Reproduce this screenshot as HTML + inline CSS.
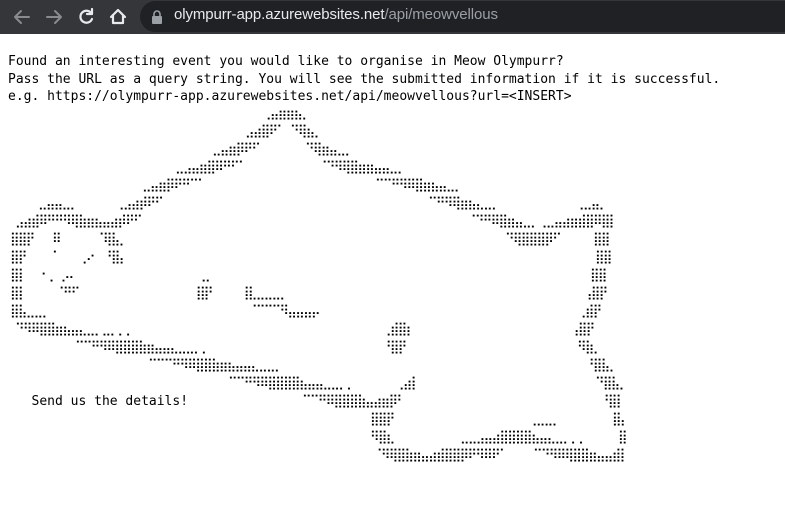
<!DOCTYPE html>
<html><head><meta charset="utf-8">
<style>
html,body{margin:0;padding:0;background:#fff;width:785px;height:506px;overflow:hidden}
.bar{position:absolute;left:0;top:0;width:785px;height:34px;background:#35363a}
.pill{position:absolute;left:140px;top:1px;width:660px;height:31px;border-radius:16px;background:#202124}
.url{position:absolute;left:174px;top:6px;font:15px "Liberation Sans","DejaVu Sans",sans-serif;color:#e8eaed;letter-spacing:-0.1px}
.url span{color:#9aa0a6}
pre{margin:0;font-family:"DejaVu Sans Mono","Liberation Mono",monospace;font-size:13px;color:#000;position:absolute;left:8px;white-space:pre}
#t{top:53px;line-height:17.5px}
#s{top:393px;left:31.5px;line-height:18px}
i{position:absolute;font-style:normal;white-space:pre;font-family:"DejaVu Sans Mono",monospace;font-size:13px;line-height:18px;letter-spacing:-1.65px;color:#000}
</style></head><body>
<div class="bar">
<svg width="140" height="34" style="position:absolute;left:0;top:0">
<g fill="none" stroke="#8a8b8e" stroke-width="2" stroke-linecap="round" stroke-linejoin="round">
<path d="M29 17H15M21 11l-6 6 6 6"/>
<path d="M47 17h14M55 11l6 6-6 6"/>
</g>
<g fill="none" stroke="#e8eaed" stroke-width="2.2" stroke-linecap="round" stroke-linejoin="round">
<path d="M91.5 13.5A6 6 0 1 0 92 19"/>
<path d="M92 9v5h-5"/>
<path d="M111 17l7-7 7 7M113 15v8h10v-8"/>
</g>
</svg>
<div class="pill"></div>
<svg width="12" height="14" style="position:absolute;left:151px;top:10px"><rect x="1" y="6" width="10" height="8" rx="1" fill="#9aa0a6"/><path d="M3 6V4a3 3 0 0 1 6 0v2" fill="none" stroke="#9aa0a6" stroke-width="1.6"/></svg>
<div class="url">olympurr-app.azurewebsites.net<span>/api/meowvellous</span></div>
</div>
<pre id="t">Found an interesting event you would like to organise in Meow Olympurr?
Pass the URL as a query string. You will see the submitted information if it is successful.
e.g. https://olympurr-app.azurewebsites.net/api/meowvellous?url=&lt;INSERT&gt;</pre>

<i style="left:262px;top:105px">⢀⣤⣶⣶⣦⡀</i>
<i style="left:245px;top:123px">⣠⣴⣿⠟⠁</i><i style="left:290px;top:123px">⠙⢿⣦⡀</i>
<i style="left:212px;top:141px">⣀⣤⣶⡿⠟⠋</i><i style="left:305px;top:141px">⠙⢿⣶⣤⣀⡀</i>
<i style="left:175px;top:159px">⣀⣠⣤⣶⣿⠿⠛⠋⠁</i><i style="left:318px;top:159px">⠈⠙⠻⢿⣿⣶⣶⣤⣤⣀⡀</i>
<i style="left:142px;top:177px">⣀⣤⣶⡿⠟⠛⠉⠁</i><i style="left:375px;top:177px">⠉⠉⠛⠻⠿⣿⣶⣦⣤⣀⡀</i>
<i style="left:38px;top:195px">⣀⣤⣤⣀⡀</i><i style="left:115px;top:195px">⢀⣠⣴⡾⠟⠋</i><i style="left:428px;top:195px">⠉⠛⠻⢿⣶⣦⣄⣀⡀</i><i style="left:575px;top:195px">⢀⣀⣤⡀</i>
<i style="left:15px;top:213px">⣠⣴⣾⠿⠛⠛⠻⢿⣷⣶⣦⣤⣴⡾⠟⠋</i><i style="left:467px;top:213px">⠈⠙⠛⠿⣿⣶⣤⣀⡀⢀⣀⣤⣴⣶⣾⣿⠿⣿⡇</i>
<i style="left:10px;top:231px">⣿⣿⡟</i><i style="left:52px;top:231px">⠿</i><i style="left:95px;top:231px">⠈⢿⣧⡀</i><i style="left:505px;top:231px">⠙⢿⣿⣿⣿⡿⠋</i><i style="left:593px;top:231px">⣿⣿</i>
<i style="left:10px;top:249px">⣿⡟</i><i style="left:52px;top:249px">⠁</i><i style="left:78px;top:249px">⢀⠔</i><i style="left:103px;top:249px">⠘⣿⡄</i><i style="left:595px;top:249px">⣿⣿</i>
<i style="left:10px;top:267px">⣿⡇</i><i style="left:37px;top:267px">⠐⢀⠀⡠⠄</i><i style="left:197px;top:267px">⢀⡀</i><i style="left:590px;top:267px">⣿⣿</i>
<i style="left:10px;top:285px">⣿⡇</i><i style="left:55px;top:285px">⠈⠛⠋</i><i style="left:192px;top:285px">⢸⣿⠃</i><i style="left:240px;top:285px">⢸⣇⣀⣀⣀⡀</i><i style="left:583px;top:285px">⢠⣿⡟</i>
<i style="left:10px;top:303px">⣿⣧⣀⣀⡀</i><i style="left:248px;top:303px">⠈⠉⠉⠉⠻⣤⣤⣤⡤</i><i style="left:577px;top:303px">⢀⣾⡟</i>
<i style="left:15px;top:321px">⠙⠻⠿⣿⣿⣶⣦⣤⣄⣀⡀⣀⡀⡀⡀</i><i style="left:382px;top:321px">⢀⣾⣿⡆</i><i style="left:570px;top:321px">⢠⣿⡟</i>
<i style="left:75px;top:339px">⠉⠉⠛⠻⠿⣿⣿⣿⣷⣶⣤⣤⣄⣀⣀⡀⡀</i><i style="left:382px;top:339px">⠘⣿⡟</i><i style="left:577px;top:339px">⠻⣷⡀</i>
<i style="left:148px;top:357px">⠉⠉⠉⠛⠻⠿⣿⣿⣷⣶⣦⣤⣤⣄⣀⣀⡀</i><i style="left:585px;top:357px">⠘⣿⣧⡀</i>
<i style="left:228px;top:375px">⠉⠉⠛⠻⠿⣿⣿⣿⣿⣦⣤⣤⣀⣀⡀⡀</i><i style="left:395px;top:375px">⢀⣴⡇</i><i style="left:595px;top:375px">⠙⣿⣧⡀</i>
<i style="left:302px;top:393px">⠉⠉⠛⠿⣿⣿⣿⣷⣤⣴⣶⡿⠃</i><i style="left:600px;top:393px">⠘⣿⡇</i>
<i style="left:370px;top:411px">⣿⣿⡟</i><i style="left:528px;top:411px">⢀⣀⣀⡀</i><i style="left:612px;top:411px">⣿⡄</i>
<i style="left:370px;top:429px">⠻⣿⣆</i><i style="left:460px;top:429px">⣀⣀⣠⣤⣴⣿⣿⣿⣿⣦⣤⣄⣀⡀⡀⡀</i><i style="left:618px;top:429px">⣿</i>
<i style="left:373px;top:447px">⠈⠻⢿⣿⣷⣶⣤⣴⣾⣿⣿⡿⠟⠻⠿⠟⠁</i><i style="left:533px;top:447px">⠉⠙⠻⠿⢿⣿⣿⣶⣤⣤⣾⡇</i>

<pre id="s">Send us the details!</pre>
</body></html>
